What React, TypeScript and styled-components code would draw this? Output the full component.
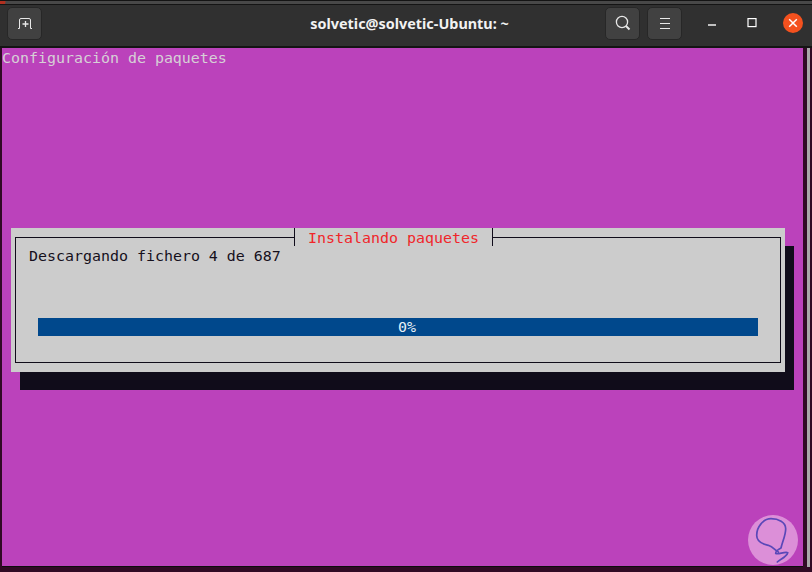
import styled, { createGlobalStyle } from 'styled-components';

const GlobalStyle = createGlobalStyle`
	html, body {
		margin: 0;
		padding: 0;
		background-color: #1a1a1a;
	}
`;

const Desktop = styled.div`
	display: flex;
	flex-direction: column;
	width: 812px;
	height: 572px;
	overflow: hidden;
	background-color: #300a24;
`;

const WindowEdge = styled.div`
	flex: none;
	height: 3px;
	background: linear-gradient(100deg, #b03020 0 5px, #484848 6px);
	border-top: 1px solid #141414;
	border-bottom: 1px solid #141414;
`;

const TitleBar = styled.header`
	display: grid;
	grid-template-columns: 1fr auto 1fr;
	align-items: center;
	flex: none;
	box-sizing: border-box;
	height: 43px;
	padding: 0 0 5px 7px;
	background-color: #303030;
	border-bottom: 2px solid #141414;
`;

const BarGroup = styled.div`
	display: flex;
	align-items: center;
	gap: 7px;
	justify-content: ${(props: { $end?: boolean }) => (props.$end ? 'flex-end' : 'flex-start')};
`;

const WindowControls = styled.div`
	display: flex;
	align-items: center;
	margin-left: 3px;
`;

const HeaderButton = styled.div`
	display: flex;
	align-items: center;
	justify-content: center;
	box-sizing: border-box;
	width: 35px;
	height: 33px;
	background-color: #414141;
	border: 1px solid #272727;
	border-radius: 5px;
	color: #e8e8e8;
`;

const WindowControl = styled.div`
	display: flex;
	align-items: center;
	justify-content: center;
	width: 40px;
	height: 32px;
	color: #ffffff;
`;

const CloseCircle = styled.div`
	display: flex;
	align-items: center;
	justify-content: center;
	width: 20px;
	height: 20px;
	margin-left: 2px;
	border-radius: 50%;
	background-color: #f4511e;
	color: #ffffff;
`;

const Title = styled.h1`
	margin: 0;
	font-family: 'Noto Sans', 'Open Sans', sans-serif;
	font-size: 14.4px;
	font-weight: 700;
	color: #f2f2f2;
	white-space: nowrap;
`;

const Frame = styled.div`
	display: flex;
	flex: 1;
	min-height: 0;
	padding: 0 2px 5px 2px;
	background-color: #300a24;
`;

const Terminal = styled.main`
	position: relative;
	flex: 1;
	display: flex;
	flex-direction: column;
	background-color: #bb42bb;
	border-bottom: 1px solid #0d0d0d;
	font-family: 'DejaVu Sans Mono', 'Liberation Mono', monospace;
	font-size: 14.95px;
	line-height: 18px;
`;

const Scrollbar = styled.div`
	flex: none;
	width: 3px;
	margin-left: 4px;
	background-color: #a8a8a8;
`;

const PackageHeading = styled.div`
	height: 18px;
	margin-top: 1px;
	color: #d6d0d6;
	white-space: pre;
`;

const Dialog = styled.section`
	position: relative;
	box-sizing: border-box;
	width: 774px;
	height: 144px;
	margin: 161px 0 0 9px;
	padding: 9px 4px;
	background-color: #cccccc;
	box-shadow: 9px 18px 0 #100c1a;
`;

const DialogBorder = styled.div`
	box-sizing: border-box;
	height: 100%;
	padding: 9px 22px 0 13px;
	border: 1px solid #100c1a;
`;

const DialogTitle = styled.div`
	position: absolute;
	top: 0;
	left: 283px;
	box-sizing: border-box;
	width: 199px;
	height: 18px;
	padding: 1px 0 0 13px;
	background-color: #cccccc;
	border-left: 1px solid #100c1a;
	border-right: 1px solid #100c1a;
	color: #f0262a;
	white-space: pre;
`;

const StatusLine = styled.div`
	height: 18px;
	color: #16101c;
	white-space: pre;
`;

const ProgressBar = styled.div`
	display: flex;
	align-items: center;
	justify-content: center;
	height: 18px;
	margin: 53px 0 0 9px;
	padding-left: 18px;
	background-color: #00488c;
	color: #e6f0f6;
`;

const Watermark = styled.svg`
	position: absolute;
	right: 4px;
	bottom: 0;
	width: 52px;
	height: 52px;
`;

const App = () => (
	<>
		<GlobalStyle />
		<Desktop>
			<WindowEdge />
			<TitleBar>
				<BarGroup>
					<HeaderButton>
						<svg width="16" height="16" viewBox="0 0 16 16" fill="none" stroke="currentColor" strokeWidth="1">
							<path d="M1 13.5h1.5V5A1.5 1.5 0 0 1 4 3.5h8A1.5 1.5 0 0 1 13.5 5v8.5H15" />
							<path d="M5.5 9h6M8.5 6v6" strokeWidth="1.3" />
						</svg>
					</HeaderButton>
				</BarGroup>
				<Title>solvetic@solvetic-Ubuntu: ~</Title>
				<BarGroup $end>
					<HeaderButton>
						<svg width="16" height="16" viewBox="0 0 16 16" fill="none" stroke="currentColor" strokeWidth="1.3">
							<circle cx="7" cy="7" r="5.6" />
							<path d="M11 11l3.5 3.5" strokeWidth="2" />
						</svg>
					</HeaderButton>
					<HeaderButton>
						<svg width="12" height="11" viewBox="0 0 12 11" stroke="currentColor" strokeWidth="1">
							<path d="M1 .5h10M1 5.5h10M1 10.5h10" />
						</svg>
					</HeaderButton>
					<WindowControls>
						<WindowControl>
							<svg width="10" height="10" viewBox="0 0 10 10" stroke="currentColor" strokeWidth="1.4">
								<path d="M1 7h8" />
							</svg>
						</WindowControl>
						<WindowControl>
							<svg width="10" height="10" viewBox="0 0 10 10" fill="none" stroke="currentColor" strokeWidth="1.2">
								<rect x="1" y=".6" width="8" height="8" />
							</svg>
						</WindowControl>
						<WindowControl>
							<CloseCircle>
								<svg width="10" height="10" viewBox="0 0 10 10" stroke="currentColor" strokeWidth="1.5">
									<path d="M1.2 1.2l7.6 7.6M8.8 1.2L1.2 8.8" />
								</svg>
							</CloseCircle>
						</WindowControl>
					</WindowControls>
				</BarGroup>
			</TitleBar>
			<Frame>
				<Terminal>
					<PackageHeading>Configuración de paquetes</PackageHeading>
					<Dialog>
						<DialogBorder>
							<StatusLine>Descargando fichero 4 de 687</StatusLine>
							<ProgressBar>0%</ProgressBar>
						</DialogBorder>
						<DialogTitle>Instalando paquetes</DialogTitle>
					</Dialog>
					<Watermark viewBox="0 0 52 52">
						<circle cx="26" cy="26" r="25" fill="#dc8fd8" />
						<path
							d="M34 34C35.3 28 38.7 21.3 38.7 14.7 38.7 8 31.3 4.7 24 4.7 16.3 4.7 9.7 13 9.7 21.3 9.7 28 16.3 30.3 21.3 31.3 26.3 33 28 36.3 31.3 38M34 34C31.3 35.3 28.7 37.3 28.7 39.3 29.7 41.3 38 37.3 40.7 38.7 39.7 43 33 45.3 30.3 48"
							fill="none"
							stroke="#5a48b8"
							strokeWidth="1.7"
							strokeLinecap="round"
						/>
					</Watermark>
				</Terminal>
				<Scrollbar />
			</Frame>
		</Desktop>
	</>
);

export default App;
